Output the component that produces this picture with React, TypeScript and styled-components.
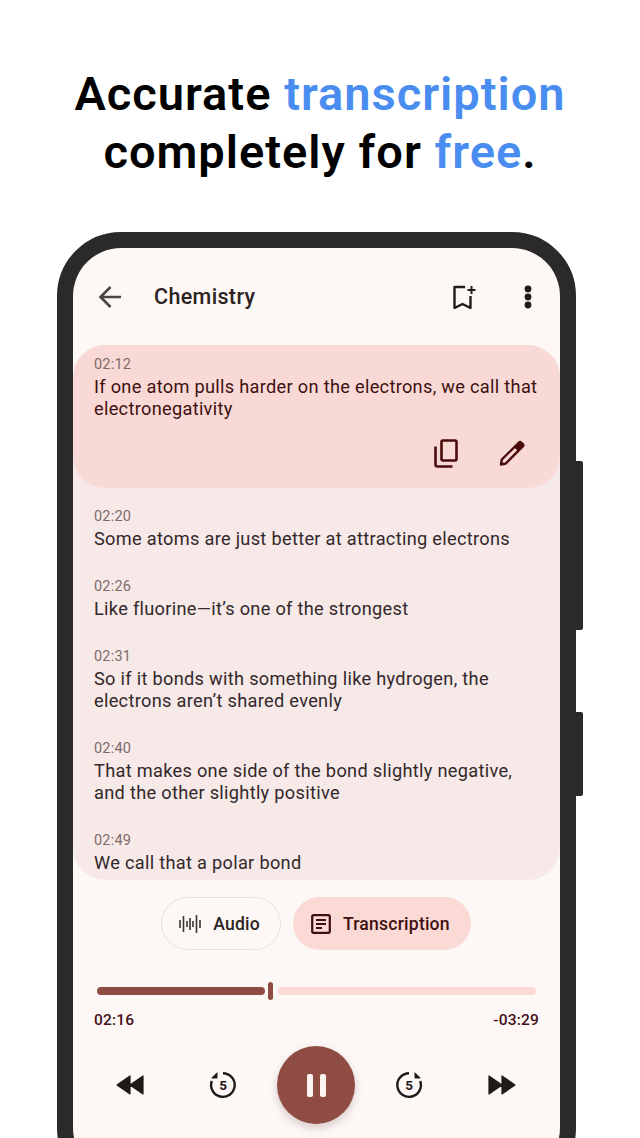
import React from 'react';
import styled, { createGlobalStyle } from 'styled-components';

const segments = [
  { time: '02:20', lines: 'Some atoms are just better at attracting electrons' },
  { time: '02:26', lines: 'Like fluorine—it’s one of the strongest' },
  { time: '02:31', lines: 'So if it bonds with something like hydrogen, the electrons aren’t shared evenly' },
  { time: '02:40', lines: 'That makes one side of the bond slightly negative, and the other slightly positive' },
  { time: '02:49', lines: 'We call that a polar bond' },
];

const GlobalStyle = createGlobalStyle`
  html, body {
    margin: 0;
    padding: 0;
    background: #ffffff;
    font-family: Roboto, "Liberation Sans", sans-serif;
  }
`;

const Page = styled.div`
  width: 640px;
  height: 1138px;
  overflow: hidden;
  background: #ffffff;
`;

const Headline = styled.h1`
  margin: 65px 0 51px;
  font-size: 47px;
  line-height: 58px;
  font-weight: 640;
  letter-spacing: 1px;
  color: #000000;
  text-align: center;
`;

const Accent = styled.span`
  color: #4a8df0;
`;

const Phone = styled.div`
  position: relative;
  width: 519px;
  height: 960px;
  margin-left: 57px;
  box-sizing: border-box;
  border: 16px solid #2a2a2a;
  border-radius: 64px;
  background: #2a2a2a;
`;

const SideButton = styled.div<{ $top: number; $height: number }>`
  position: absolute;
  right: -23px;
  top: ${(p) => p.$top}px;
  width: 7px;
  height: ${(p) => p.$height}px;
  background: #2a2a2a;
  border-radius: 0 2px 2px 0;
`;

const Screen = styled.div`
  height: 100%;
  overflow: hidden;
  border-radius: 48px;
  background: #fdf8f6;
`;

const Header = styled.div`
  display: flex;
  align-items: center;
  height: 97px;
  padding: 0 27px 0 25px;
  box-sizing: border-box;
`;

const Title = styled.div`
  flex: 1;
  margin-left: 32px;
  font-size: 21.5px;
  font-weight: 500;
  letter-spacing: 0.35px;
  color: #2c2322;
`;

const HeaderIcons = styled.div`
  display: flex;
  align-items: center;
  gap: 47px;
`;

const Transcript = styled.div`
  height: 535px;
  overflow: hidden;
  border-radius: 32px;
  background: #f6e9e8;
`;

const Selected = styled.div`
  height: 143px;
  box-sizing: border-box;
  padding: 11px 20px 0 21px;
  border-radius: 32px;
  background: #f9d9d5;
  color: #3f1010;
`;

const Rows = styled.div`
  display: flex;
  flex-direction: column;
  gap: 28px;
  padding: 20px 20px 0 21px;
  color: #33282a;
`;

const Time = styled.div`
  margin-bottom: 2px;
  font-size: 14.5px;
  line-height: 18px;
  letter-spacing: 0.2px;
  color: #7d6b69;
`;

const Line = styled.div`
  font-size: 18.2px;
  line-height: 22px;
  letter-spacing: 0.3px;
`;

const Actions = styled.div`
  display: flex;
  justify-content: flex-end;
  gap: 18px;
  margin: 9px 4px 0 0;
`;

const ActionSlot = styled.div`
  display: flex;
  align-items: center;
  justify-content: center;
  width: 48px;
  height: 48px;
`;

const Tabs = styled.div`
  display: flex;
  justify-content: center;
  gap: 12px;
  margin: 17px 1px 0 0;
`;

const Tab = styled.div<{ $active?: boolean }>`
  display: flex;
  align-items: center;
  gap: 12px;
  height: 53px;
  padding: 0 20px 0 17px;
  box-sizing: border-box;
  border-radius: 27px;
  border: 1px solid ${(p) => (p.$active ? '#fbd9d5' : '#e9e1e0')};
  background: ${(p) => (p.$active ? '#fbd9d5' : 'transparent')};
  color: ${(p) => (p.$active ? '#3f1010' : '#2c2322')};
  font-size: 17.6px;
  font-weight: 500;
  letter-spacing: 0.2px;
`;

const Slider = styled.div`
  display: flex;
  align-items: center;
  height: 18px;
  margin: 32px 24px 0;
`;

const SliderPlayed = styled.div`
  width: 168px;
  height: 8px;
  border-radius: 4px;
  background: #8f4c43;
`;

const SliderThumb = styled.div`
  width: 5px;
  height: 18px;
  margin: 0 5px 0 3px;
  border-radius: 3px;
  background: #8f4c43;
`;

const SliderRest = styled.div`
  flex: 1;
  height: 8px;
  border-radius: 4px;
  background: #fcd9d5;
`;

const Times = styled.div`
  display: flex;
  justify-content: space-between;
  margin: 10px 21px 0;
  font-size: 15.5px;
  line-height: 20px;
  font-weight: 500;
  letter-spacing: 0.2px;
  color: #44101a;
`;

const Transport = styled.div`
  display: grid;
  grid-template-columns: repeat(5, 93px);
  justify-content: center;
  justify-items: center;
  align-items: center;
  margin: 16px 1px 0 0;
`;

const PauseButton = styled.div`
  display: flex;
  align-items: center;
  justify-content: center;
  gap: 7px;
  width: 78px;
  height: 78px;
  border-radius: 50%;
  background: #8f4c43;
  box-shadow: 0 4px 10px rgba(80, 40, 35, 0.22);
`;

const PauseBar = styled.div`
  width: 6px;
  height: 23px;
  border-radius: 2px;
  background: #fdf3f1;
`;

const ArrowBack = () => (
  <svg width="24" height="24" viewBox="0 0 24 24" fill="none" stroke="#4b4443" strokeWidth="2.600">
    <path d="M23 12H2.500M12.500 2L2.500 12l10 10" />
  </svg>
);

const BookmarkAdd = () => (
  <svg width="24" height="24" viewBox="0 0 24 24" fill="none" stroke="#231c1b" strokeWidth="2.400" strokeLinejoin="round">
    <path d="M13 2H2.500v21l8-4 8 4V11" />
    <path d="M19.500 1v8M15.500 5h8" strokeWidth="2" />
  </svg>
);

const MoreDots = () => (
  <svg width="10" height="26" viewBox="0 0 10 26" fill="#231c1b">
    <circle cx="5" cy="5" r="3.400" />
    <circle cx="5" cy="13" r="3.400" />
    <circle cx="5" cy="21" r="3.400" />
  </svg>
);

const CopyIcon = () => (
  <svg width="24" height="29" viewBox="0 0 24 29" fill="none" stroke="#4a0b0b" strokeWidth="2.600" strokeLinejoin="round">
    <rect x="7.500" y="1.500" width="15" height="20" rx="1.500" />
    <path d="M1.500 7.500V25.500a2 2 0 0 0 2 2H18.500" />
  </svg>
);

const PencilIcon = () => (
  <svg width="26" height="26" viewBox="0 0 26 26" fill="none" stroke="#4a0b0b" strokeWidth="2.400" strokeLinejoin="round">
    <path d="M2 24.500l.8-5L16 6.500l3.800 3.800L6.800 23.500z" />
    <path d="M16.500 6l3.500-3.500a1.500 1.500 0 0 1 2.100 0l1.700 1.700a1.500 1.500 0 0 1 0 2.100L20.300 9.800z" fill="#4a0b0b" />
  </svg>
);

const WaveIcon = () => (
  <svg width="22" height="20" viewBox="0 0 22 20" fill="none" stroke="#3a3332" strokeWidth="1.600">
    <path d="M1 6v8M4.500 2v16M8 7v6M11 4v12M14 7v6M17.500 1v18M21 6v8" />
  </svg>
);

const ArticleIcon = () => (
  <svg width="20" height="20" viewBox="0 0 20 20" fill="none" stroke="#3f1010" strokeWidth="2.200">
    <rect x="1.200" y="1.200" width="17.600" height="17.600" rx="1.500" />
    <path d="M5 6h10M5 10h10M5 14h6" />
  </svg>
);

const SkipIcon = ({ flip }: { flip?: boolean }) => (
  <svg width="30" height="22" viewBox="0 0 30 22" fill="#1f1917" stroke="#1f1917" strokeWidth="1.200" strokeLinejoin="round" style={flip ? { transform: 'scaleX(-1)' } : undefined}>
    <path d="M15 2v18L2 11zM28 2v18L15 11z" />
  </svg>
);

const JumpIcon = ({ flip }: { flip?: boolean }) => (
  <svg width="30" height="30" viewBox="0 0 30 30">
    <g style={flip ? { transform: 'scaleX(-1)', transformOrigin: '15px 15px' } : undefined} fill="none" stroke="#1f1917" strokeWidth="2.400">
      <path d="M15 3.200A11.800 11.800 0 1 1 3.800 11" />
      <path d="M9 2.800v5.200H3.800z" fill="#1f1917" strokeWidth="1" strokeLinejoin="round" />
    </g>
    <text x="15" y="20" textAnchor="middle" fontSize="13.500" fontWeight="700" fontFamily="Roboto, sans-serif" fill="#1f1917">
      5
    </text>
  </svg>
);

export default function App() {
  return (
    <Page>
      <GlobalStyle />
      <Headline>
        Accurate <Accent>transcription</Accent>
        <br />
        completely for <Accent>free</Accent>.
      </Headline>
      <Phone>
        <SideButton $top={213} $height={169} />
        <SideButton $top={464} $height={84} />
        <Screen>
          <Header>
            <ArrowBack />
            <Title>Chemistry</Title>
            <HeaderIcons>
              <BookmarkAdd />
              <MoreDots />
            </HeaderIcons>
          </Header>
          <Transcript>
            <Selected>
              <Time>02:12</Time>
              <Line>If one atom pulls harder on the electrons, we call that electronegativity</Line>
              <Actions>
                <ActionSlot>
                  <CopyIcon />
                </ActionSlot>
                <ActionSlot>
                  <PencilIcon />
                </ActionSlot>
              </Actions>
            </Selected>
            <Rows>
              {segments.map((s) => (
                <div key={s.time}>
                  <Time>{s.time}</Time>
                  <Line>{s.lines}</Line>
                </div>
              ))}
            </Rows>
          </Transcript>
          <Tabs>
            <Tab>
              <WaveIcon />
              Audio
            </Tab>
            <Tab $active>
              <ArticleIcon />
              Transcription
            </Tab>
          </Tabs>
          <Slider>
            <SliderPlayed />
            <SliderThumb />
            <SliderRest />
          </Slider>
          <Times>
            <span>02:16</span>
            <span>-03:29</span>
          </Times>
          <Transport>
            <SkipIcon />
            <JumpIcon />
            <PauseButton>
              <PauseBar />
              <PauseBar />
            </PauseButton>
            <JumpIcon flip />
            <SkipIcon flip />
          </Transport>
        </Screen>
      </Phone>
    </Page>
  );
}
